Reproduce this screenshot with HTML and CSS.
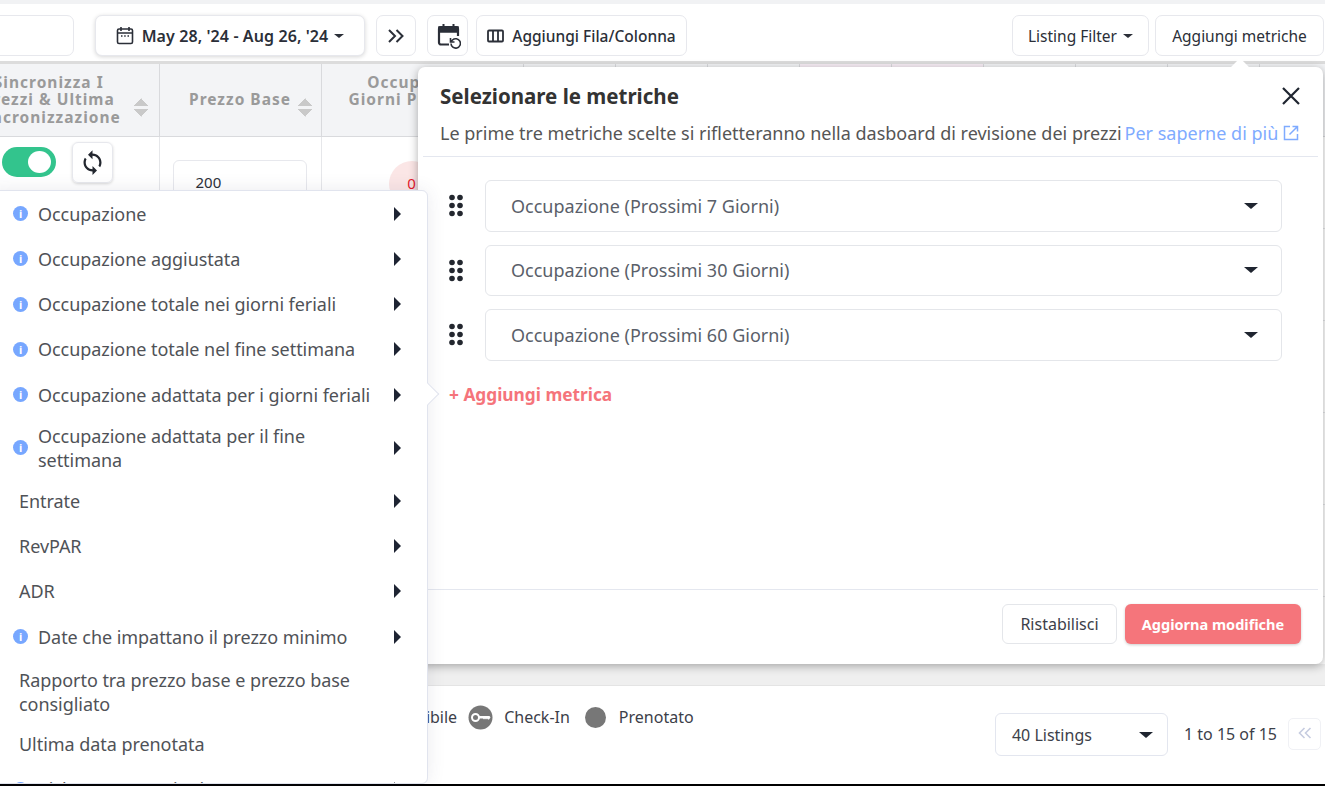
FILE: index.html
```html
<!DOCTYPE html>
<html lang="it">
<head>
    <meta charset="UTF-8">
    <meta name="viewport" content="width=device-width, initial-scale=1.0">
    <title>Selezionare le metriche</title>
    <link rel="stylesheet" href="styles.css">
</head>
<body>
    <div class="top-strip"></div>

    <div class="toolbar">
        <button class="tool-btn search-btn"></button>
        <button class="tool-btn date-btn">
            <svg class="icon" width="18" height="19" viewBox="0 0 18 19" fill="none" stroke="#2b2f38" stroke-width="1.6">
                <rect x="1.5" y="3" width="15" height="14.5" rx="1.5"/>
                <path d="M1.5 7h15M5 1v4M13 1v4"/>
                <path d="M5 10h1.5M8.2 10h1.5M11.5 10H13" stroke-width="1.3"/>
            </svg>
            May 28, '24 - Aug 26, '24
            <span class="caret"></span>
        </button>
        <button class="tool-btn square-btn">
            <svg width="18" height="16" viewBox="0 0 18 16" fill="none" stroke="#2b2f38" stroke-width="2">
                <path d="M2 2l6 6-6 6M9.500 2l6 6-6 6"/>
            </svg>
        </button>
        <button class="tool-btn square-btn cal-btn">
            <svg width="24" height="26" viewBox="0 0 24 26" fill="none" stroke="#2b2f38">
                <path d="M12 21.500H4a2 2 0 0 1-2-2V6a2 2 0 0 1 2-2h15a2 2 0 0 1 2 2v7" stroke-width="2.200"/>
                <path d="M2 4h19v5H2z" fill="#2b2f38" stroke-width="1.500"/>
                <path d="M6.500 1v4M16.500 1v4" stroke-width="2"/>
                <path d="M14 20.500a4.700 4.700 0 1 0 1.500-3.500L13.500 19M13.500 15v4h4" stroke-width="1.600"/>
            </svg>
        </button>
        <button class="tool-btn add-btn">
            <svg class="icon" width="17" height="14" viewBox="0 0 17 14" fill="none" stroke="#2b2f38" stroke-width="1.800">
                <rect x="1" y="1.500" width="15" height="11" rx="1"/>
                <path d="M6 1.500v11M11 1.500v11"/>
            </svg>
            Aggiungi Fila/Colonna
        </button>
        <div class="toolbar-right">
            <button class="tool-btn plain-btn">Listing Filter <span class="caret"></span></button>
            <button class="tool-btn plain-btn metrics-btn">Aggiungi metriche</button>
        </div>
    </div>

    <div class="table-container">
        <table class="grid">
            <colgroup>
                <col class="col-sync">
                <col class="col-price">
                <col class="col-occ">
                <col class="col-n"><col class="col-n"><col class="col-n">
                <col class="col-n"><col class="col-n"><col class="col-n">
                <col class="col-n"><col class="col-n"><col class="col-n">
            </colgroup>
            <thead>
                <tr>
                    <th><div class="th-inner th-sync">Sincronizza I<br>Prezzi &amp; Ultima<br>Sincronizzazione<span class="sort sort-sync"></span></div></th>
                    <th><div class="th-inner th-price">Prezzo Base<span class="sort"></span></div></th>
                    <th><div class="th-occ">Occupazione<br>Giorni Prossimi 7<span class="info th-info">i</span></div></th>
                    <th></th><th></th><th></th>
                    <th class="pink"></th><th class="pink"></th>
                    <th></th><th></th><th></th><th></th>
                </tr>
            </thead>
            <tbody id="rows"></tbody>
        </table>
    </div>

    <div class="band"></div>

    <div class="footer">
        <div class="legend">
            <span>Disponibile</span>
            <svg class="legend-key" width="25" height="25" viewBox="0 0 25 25">
                <circle cx="12.500" cy="12.500" r="12" fill="#777"/>
                <circle cx="7.500" cy="12.500" r="3.500" fill="none" stroke="#fff" stroke-width="2"/>
                <path d="M11 11h10.500l1 1.500-1.500 2h-1l-1-1-1 1-1-1-1 1-1-1h-4z" fill="#fff"/>
            </svg>
            <span>Check-In</span>
            <span class="legend-dot"></span>
            <span>Prenotato</span>
        </div>
        <div class="pager">
            <div class="listing-select">40 Listings <span class="caret caret-big"></span></div>
            <span class="pager-count">1 to 15 of 15</span>
            <button class="pager-btn">
                <svg width="14" height="12" viewBox="0 0 14 12" fill="none" stroke="#c6cce0" stroke-width="1.600">
                    <path d="M6.500 1l-5 5 5 5M12.500 1l-5 5 5 5"/>
                </svg>
            </button>
        </div>
    </div>
    <div class="bottom-line"></div>

    <!-- pannello metriche -->
    <div class="metric-panel">
        <div class="panel-pointer"></div>
        <div class="panel-head">
            <div class="panel-title-row">
                <h2>Selezionare le metriche</h2>
                <svg class="close" width="20" height="20" viewBox="0 0 20 20" fill="none" stroke="#1f2530" stroke-width="2.200">
                    <path d="M2 2l16 16M18 2L2 18"/>
                </svg>
            </div>
            <p class="panel-sub">Le prime tre metriche scelte si rifletteranno nella dasboard di revisione dei prezzi<a class="panel-link">Per saperne di più
                    <svg width="16" height="16" viewBox="0 0 16 16" fill="none" stroke="#7fabff" stroke-width="1.500">
                        <path d="M7 1.500H1.500v13h13V9M9.500 1.500h5v5M14.500 1.500L6.500 9.500"/>
                    </svg>
                </a>
            </p>
        </div>
        <div class="panel-body">
            <div class="metric-row">
                <svg class="drag" width="14" height="23" viewBox="0.500 0 14 23" fill="#23272f"><circle cx="3.500" cy="3.500" r="2.800"/><circle cx="11.500" cy="3.500" r="2.800"/><circle cx="3.500" cy="11.500" r="2.800"/><circle cx="11.500" cy="11.500" r="2.800"/><circle cx="3.500" cy="19.500" r="2.800"/><circle cx="11.500" cy="19.500" r="2.800"/></svg>
                <div class="metric-select">Occupazione (Prossimi 7 Giorni)<span class="caret caret-big"></span></div>
            </div>
            <div class="metric-row">
                <svg class="drag" width="14" height="23" viewBox="0.500 0 14 23" fill="#23272f"><circle cx="3.500" cy="3.500" r="2.800"/><circle cx="11.500" cy="3.500" r="2.800"/><circle cx="3.500" cy="11.500" r="2.800"/><circle cx="11.500" cy="11.500" r="2.800"/><circle cx="3.500" cy="19.500" r="2.800"/><circle cx="11.500" cy="19.500" r="2.800"/></svg>
                <div class="metric-select">Occupazione (Prossimi 30 Giorni)<span class="caret caret-big"></span></div>
            </div>
            <div class="metric-row">
                <svg class="drag" width="14" height="23" viewBox="0.500 0 14 23" fill="#23272f"><circle cx="3.500" cy="3.500" r="2.800"/><circle cx="11.500" cy="3.500" r="2.800"/><circle cx="3.500" cy="11.500" r="2.800"/><circle cx="11.500" cy="11.500" r="2.800"/><circle cx="3.500" cy="19.500" r="2.800"/><circle cx="11.500" cy="19.500" r="2.800"/></svg>
                <div class="metric-select">Occupazione (Prossimi 60 Giorni)<span class="caret caret-big"></span></div>
            </div>
            <div class="add-metric">+ Aggiungi metrica</div>
        </div>
        <div class="panel-foot">
            <button class="btn-reset">Ristabilisci</button>
            <button class="btn-save">Aggiorna modifiche</button>
        </div>
    </div>

    <!-- menu metriche -->
    <div class="metric-menu">
        <div class="menu-item"><span class="info">i</span><span class="menu-label">Occupazione</span><span class="arrow"></span></div>
        <div class="menu-item"><span class="info">i</span><span class="menu-label">Occupazione aggiustata</span><span class="arrow"></span></div>
        <div class="menu-item"><span class="info">i</span><span class="menu-label">Occupazione totale nei giorni feriali</span><span class="arrow"></span></div>
        <div class="menu-item"><span class="info">i</span><span class="menu-label">Occupazione totale nel fine settimana</span><span class="arrow"></span></div>
        <div class="menu-item"><span class="info">i</span><span class="menu-label">Occupazione adattata per i giorni feriali</span><span class="arrow"></span></div>
        <div class="menu-item"><span class="info">i</span><span class="menu-label">Occupazione adattata per il fine settimana</span><span class="arrow"></span></div>
        <div class="menu-item no-icon"><span class="menu-label">Entrate</span><span class="arrow"></span></div>
        <div class="menu-item no-icon"><span class="menu-label">RevPAR</span><span class="arrow"></span></div>
        <div class="menu-item no-icon"><span class="menu-label">ADR</span><span class="arrow"></span></div>
        <div class="menu-item"><span class="info">i</span><span class="menu-label">Date che impattano il prezzo minimo</span><span class="arrow"></span></div>
        <div class="menu-item no-icon ratio-item"><span class="menu-label">Rapporto tra prezzo base e prezzo base consigliato</span></div>
        <div class="menu-item no-icon"><span class="menu-label">Ultima data prenotata</span></div>
        <div class="menu-item"><span class="info">i</span><span class="menu-label">Pickup Prenotazioni</span><span class="arrow"></span></div>
    </div>
    <div class="menu-pointer"></div>

    <script>
        // righe della tabella dietro ai pannelli
        const chips = ['chip-red', 'chip-red', 'chip-red', 'chip-green', 'chip-red', 'chip-red'];
        const tbody = document.getElementById('rows');

        chips.forEach((chip, i) => {
            const row = document.createElement('tr');
            let html = '<td>';
            if (i === 0) {
                html = '<td class="sync-cell"><div class="sync-wrap"><span class="toggle"></span>' +
                    '<span class="sync-btn"><svg width="27" height="27" viewBox="0 0 24 24" fill="#23272f">' +
                    '<path d="M12 4V1L8 5l4 4V6c3.310 0 6 2.690 6 6 0 1.010-.250 1.970-.700 2.800l1.460 1.460C19.540 15.030 20 13.570 20 12c0-4.420-3.580-8-8-8zm0 14c-3.310 0-6-2.690-6-6 0-1.010.250-1.970.700-2.800L5.240 7.740C4.460 8.970 4 10.430 4 12c0 4.420 3.580 8 8 8v3l4-4-4-4v3z"/>' +
                    '</svg></span></div>';
            }
            html += '</td><td>' + (i === 0 ? '<div class="price-input">200</div>' : '') + '</td>';
            html += '<td>' + (i === 0 ? '<span class="occ-pill">0</span>' : '') + '</td>';
            for (let c = 0; c < 8; c++) html += '<td></td>';
            html += '<td class="chip-cell"><span class="chip ' + chip + '"></span></td>';
            row.innerHTML = html;
            tbody.appendChild(row);
        });
    </script>
</body>
</html>
```

FILE: styles.css
```css
* {
    box-sizing: border-box;
}
body {
    font-family: "Noto Sans", Arial, sans-serif;
    background-color: #fff;
    color: #2b2f38;
    margin: 0;
    padding: 0;
    display: flex;
    flex-direction: column;
    height: 786px;
    overflow: hidden;
    position: relative;
}
button {
    font-family: inherit;
    cursor: pointer;
}

.top-strip {
    height: 4px;
    background-color: #f1f2f4;
    flex: none;
}

/* Toolbar */
.toolbar {
    height: 57px;
    flex: none;
    display: flex;
    align-items: flex-start;
    padding-top: 11px;
    overflow: hidden;
}
.tool-btn {
    height: 41px;
    flex: none;
    background-color: #fff;
    border: 1px solid #e7e8ed;
    border-radius: 7px;
    display: flex;
    align-items: center;
    justify-content: center;
    font-size: 15.500px;
    color: #2b2f38;
    padding: 0;
}
.search-btn {
    width: 134px;
    margin-left: -60px;
}
.date-btn {
    width: 270px;
    margin-left: 21px;
    font-weight: 600;
    font-size: 16px;
    letter-spacing: 0.1px;
    box-shadow: 0 1px 4px rgba(0, 0, 0, 0.16);
}
.date-btn .icon {
    margin-right: 8px;
}
.square-btn {
    width: 40px;
    margin-left: 11px;
}
.cal-btn {
    width: 41px;
}
.cal-btn svg {
    margin-left: 2px;
}
.add-btn {
    width: 211px;
    margin-left: 8px;
    font-weight: 500;
}
.add-btn .icon {
    margin-right: 8px;
}
.toolbar-right {
    margin-left: auto;
    display: flex;
    gap: 6px;
    padding-right: 1px;
}
.plain-btn {
    width: 137px;
}
.metrics-btn {
    width: 169px;
}
.caret {
    display: inline-block;
    width: 0;
    height: 0;
    margin-left: 6px;
    border-left: 5px solid transparent;
    border-right: 5px solid transparent;
    border-top: 4.500px solid #2b2f38;
}
.caret-big {
    border-left-width: 7px;
    border-right-width: 7px;
    border-top-width: 6px;
    border-top-color: #1f2530;
}

/* Table */
.table-container {
    height: 624px;
    flex: none;
    overflow: hidden;
    border-top: 3px solid #dcdcdc;
}
.grid {
    border-collapse: collapse;
    table-layout: fixed;
    width: 1412px;
    margin-left: -61px;
}
.col-sync { width: 220px; }
.col-price { width: 162px; }
.col-occ { width: 202px; }
.col-n { width: 92px; }
.grid th {
    height: 72px;
    background-color: #f3f4f6;
    border-right: 1px solid #d9dadd;
    border-bottom: 1px solid #d9dadd;
    padding: 0;
    color: #9a9a9a;
    font-size: 15.500px;
    font-weight: 700;
    letter-spacing: 1px;
    line-height: 17.500px;
}
.grid th.pink {
    background-color: #f8eef6;
}
.grid td {
    height: 92px;
    border-right: 1px solid #e6e7ea;
    border-bottom: 1px solid #e6e7ea;
    padding: 0;
    vertical-align: top;
}
.th-inner {
    display: flex;
    align-items: center;
    justify-content: center;
    text-align: center;
}
.th-sync {
    padding-left: 28px;
}
.th-price {
    padding-left: 22px;
}
.th-occ {
    text-align: center;
}
.th-info {
    display: block;
    margin: 2px auto 0;
    letter-spacing: 0;
}
.sort {
    display: inline-block;
    width: 15px;
    height: 19px;
    margin: 16px 0 0 7px;
    flex: none;
    background:
        linear-gradient(to bottom right, transparent 50%, #c9c9c9 50%) 0 0 / 7.500px 8px no-repeat,
        linear-gradient(to bottom left, transparent 50%, #c9c9c9 50%) 7.500px 0 / 7.500px 8px no-repeat,
        linear-gradient(to top right, transparent 50%, #c9c9c9 50%) 0 11px / 7.500px 8px no-repeat,
        linear-gradient(to top left, transparent 50%, #c9c9c9 50%) 7.500px 11px / 7.500px 8px no-repeat;
}
.sort-sync {
    margin-left: 13px;
}
.sync-wrap {
    display: flex;
    align-items: center;
    gap: 16px;
    margin: 5px 0 0 63px;
}
.toggle {
    width: 54px;
    height: 30px;
    border-radius: 15px;
    background-color: #33c48d;
    position: relative;
}
.toggle::after {
    content: "";
    position: absolute;
    right: 5px;
    top: 4px;
    width: 23px;
    height: 22px;
    border-radius: 50%;
    background-color: #fff;
}
.sync-btn {
    width: 41px;
    height: 41px;
    border: 1px solid #e7e8ed;
    border-radius: 6px;
    box-shadow: 0 1px 3px rgba(0, 0, 0, 0.16);
    display: flex;
    align-items: center;
    justify-content: center;
}
.price-input {
    width: 134px;
    height: 46px;
    margin: 23px 0 0 13px;
    border: 1px solid #e7e8ed;
    border-radius: 6px;
    padding: 11px 22px;
    font-size: 15px;
}
.occ-pill {
    display: block;
    width: 46px;
    height: 46px;
    margin: 24px 0 0 67px;
    border-radius: 50%;
    background-color: #fbe6e6;
    color: #e8182c;
    text-align: center;
    font-size: 15px;
    line-height: 44px;
}
.chip-cell {
    padding-left: 66px !important;
}
.chip {
    display: block;
    width: 20px;
    height: 28px;
    margin-top: 32px;
    border-left: 2px dotted #d9808c;
}
.chip-green {
    border-left: 2px solid #c6e5a8;
    margin-top: 20px;
}

.band {
    height: 21px;
    flex: none;
    margin-top: -21px;
    background-color: #efefef;
    position: relative;
}

/* Footer */
.footer {
    height: 99px;
    flex: none;
    border-top: 1px solid #e4e4e4;
    display: flex;
    justify-content: space-between;
    font-size: 16px;
    color: #3c4049;
}
.legend {
    display: flex;
    align-items: center;
    height: 24px;
    margin-top: 19px;
    margin-left: 373px;
}
.legend-key {
    margin: 0 11px;
}
.legend-dot {
    width: 21px;
    height: 21px;
    border-radius: 50%;
    background-color: #777;
    margin: 0 13px 0 15px;
}
.pager {
    display: flex;
    align-items: flex-start;
    padding: 27px 4px 0 0;
}
.listing-select {
    width: 173px;
    height: 43px;
    border: 1px solid #e3e6ef;
    border-radius: 6px;
    display: flex;
    align-items: center;
    justify-content: space-between;
    padding: 0 14px 0 16px;
}
.pager-count {
    margin: 10px 11px 0 16px;
}
.pager-btn {
    width: 33px;
    height: 32px;
    margin-top: 5px;
    background-color: #fff;
    border: 1px solid #f0f1f5;
    border-radius: 5px;
}
.bottom-line {
    height: 2px;
    flex: none;
    background-color: #000;
}

/* Menu */
.metric-menu {
    position: absolute;
    left: -10px;
    top: 190px;
    width: 438px;
    height: 594px;
    overflow: hidden;
    background-color: #fff;
    border: 1px solid #e1e4ee;
    border-radius: 6px;
    box-shadow: 0 0 18px rgba(60, 60, 100, 0.1);
    z-index: 2;
}
.menu-item {
    display: flex;
    align-items: center;
    min-height: 45.250px;
    padding: 6.500px 22px;
    font-size: 18px;
    line-height: 24px;
    letter-spacing: -0.05px;
    color: #4f5257;
}
.menu-item.no-icon {
    padding-left: 28px;
}
.menu-item.ratio-item {
    padding-top: 9px;
    padding-bottom: 5px;
}
.info {
    width: 15px;
    height: 15px;
    flex: none;
    margin-right: 10px;
    border-radius: 50%;
    background-color: #77a7ff;
    color: #fff;
    font-size: 11px;
    font-weight: 700;
    line-height: 15px;
    text-align: center;
}
.menu-label {
    flex: 1;
    padding-right: 16px;
}
.arrow {
    flex: none;
    width: 0;
    height: 0;
    margin-left: auto;
    border-top: 7px solid transparent;
    border-bottom: 7px solid transparent;
    border-left: 7px solid #1e2433;
    margin-right: 4px;
}
.menu-pointer {
    position: absolute;
    left: 420px;
    top: 386px;
    width: 16px;
    height: 16px;
    background-color: #fff;
    border-top: 1px solid #e1e4ee;
    border-right: 1px solid #e1e4ee;
    transform: rotate(45deg);
    z-index: 3;
}

/* Pannello */
.metric-panel {
    position: absolute;
    left: 418px;
    top: 67px;
    width: 905px;
    height: 597px;
    background-color: #fff;
    border-radius: 7px;
    box-shadow: 0 2px 10px rgba(0, 0, 0, 0.32);
    display: flex;
    flex-direction: column;
}
.panel-pointer {
    position: absolute;
    right: 76px;
    top: -6px;
    width: 14px;
    height: 14px;
    background-color: #fff;
    transform: rotate(45deg);
}
.panel-head {
    height: 90px;
    margin: 0 5px;
    padding: 14px 17px 0;
    border-bottom: 1px solid #e4e7ef;
    flex: none;
}
.panel-title-row {
    display: flex;
    justify-content: space-between;
    align-items: center;
    height: 30px;
}
.panel-title-row h2 {
    margin: 0;
    font-size: 20.500px;
    font-weight: 700;
    color: #333;
}
.panel-sub {
    margin: 10px 0 0;
    font-size: 18px;
    line-height: 24px;
    color: #555;
    white-space: nowrap;
}
.panel-link {
    color: #7fabff;
    margin-left: 3px;
}
.panel-link svg {
    vertical-align: -1px;
}
.panel-body {
    flex: 1;
    padding: 23px 41px 0 31px;
}
.metric-row {
    display: flex;
    align-items: center;
    gap: 22px;
    margin-bottom: 13px;
}
.metric-select {
    flex: 1;
    height: 51.500px;
    border: 1px solid #e4e6ea;
    border-radius: 6px;
    display: flex;
    align-items: center;
    justify-content: space-between;
    padding: 0 23px 0 25px;
    font-size: 18px;
    color: #5a5f6a;
}
.add-metric {
    margin-top: 22px;
    font-size: 17.300px;
    font-weight: 700;
    color: #f5747b;
}
.panel-foot {
    height: 75px;
    flex: none;
    margin-left: 10px;
    margin-right: 5px;
    border-top: 1px solid #e4e7ef;
    display: flex;
    justify-content: flex-end;
    gap: 8px;
    padding: 14px 17px 0 0;
}
.btn-reset,
.btn-save {
    height: 40px;
    border-radius: 6px;
}
.btn-reset {
    width: 115px;
    background-color: #fff;
    border: 1px solid #e4e6ea;
    color: #3c4049;
    font-size: 16px;
}
.btn-save {
    width: 176px;
    background-color: #f5757b;
    border: none;
    color: #fff;
    font-size: 14.500px;
    font-weight: 700;
    box-shadow: 0 1px 3px rgba(0, 0, 0, 0.2);
}
```
